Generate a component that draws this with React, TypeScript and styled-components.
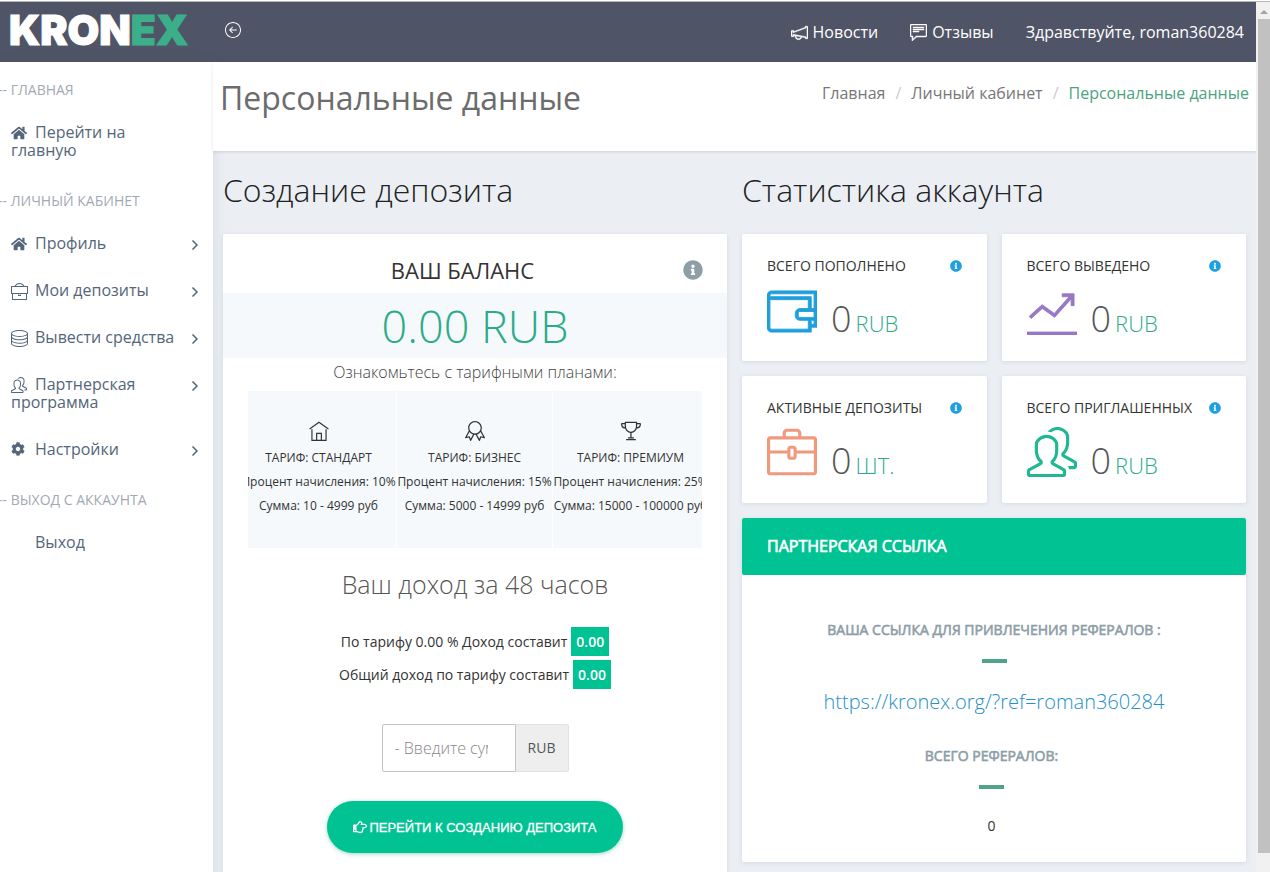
import React from 'react';
import styled, { createGlobalStyle } from 'styled-components';
import { TfiAnnouncement, TfiBriefcase, TfiCommentAlt, TfiHome, TfiServer, TfiStatsUp, TfiWallet } from 'react-icons/tfi';
import { SlArrowLeftCircle, SlBadge, SlBriefcase, SlPeople, SlTrophy } from 'react-icons/sl';
import { FaCog, FaHome, FaInfoCircle, FaRegHandPointRight } from 'react-icons/fa';
import type { IconType } from 'react-icons';

const GlobalStyle = createGlobalStyle`
  * { box-sizing: border-box; }
  body {
    margin: 0;
    background: #ebeff4;
    color: #333;
    font: 400 14px/24px "Open Sans", "Noto Sans", sans-serif;
  }
  a { color: inherit; text-decoration: none; }
  h1, h2, h3, h4, p, ul, ol, dl, dd { margin: 0; padding: 0; font-weight: 400; }
  ul, ol { list-style: none; }
  svg { flex: none; }
`;

const Window = styled.div`
  display: flex;
  height: 100vh;
  overflow: hidden;
  border-top: 1px solid #fff;
`;

const Page = styled.div`
  flex: 1;
  min-width: 0;
  border-top: 1px solid #b4b5b8;
`;

const Header = styled.header`
  display: flex;
  align-items: center;
  height: 60px;
  padding: 0 12px 0 9px;
  background: #505467;
  color: #fff;
  svg { stroke: currentColor; stroke-width: 0.5px; }
`;

const Logo = styled.a`
  flex: none;
  width: 216px;
  padding-bottom: 4px;
  font: 900 41px/56px Inter, sans-serif;
  -webkit-text-stroke: 1px currentColor;
  color: #fff;
  span { color: #3aaf8a; }
`;

const CollapseButton = styled.button`
  display: flex;
  padding: 0;
  margin-bottom: 4px;
  border: 0;
  background: none;
  color: #fff;
`;

const TopNav = styled.nav`
  display: flex;
  gap: 32px;
  margin-left: auto;
  font-size: 16px;
`;

const TopLink = styled.a`
  display: flex;
  align-items: center;
  gap: 5px;
`;

const Body = styled.div`
  display: flex;
  align-items: stretch;
  min-height: calc(100vh - 62px);
`;

const Sidebar = styled.nav`
  flex: none;
  width: 213px;
  padding-top: 16px;
  background: #fff;
  box-shadow: 1px 0 12px rgba(60, 70, 100, 0.12);
`;

const NavTitle = styled.h4`
  margin-left: -2px;
  padding-bottom: 21px;
  font-size: 14px;
  line-height: 24px;
  color: #a2a9b4;
  white-space: nowrap;
`;

const NavGroup = styled.ul`
  padding-bottom: 30px;
`;

const NavItem = styled.li`
  & + & { margin-top: 29px; }
`;

const NavLink = styled.a`
  display: flex;
  align-items: flex-start;
  padding: 0 14px 0 11px;
  font-size: 16px;
  line-height: 18px;
  color: #54667a;
  svg:last-child { margin-top: 5px; }
`;

const NavText = styled.span`
  flex: 1;
  padding-right: 16px;
`;

const NavIcon = styled.span`
  display: inline-block;
  width: 24px;
  height: 17px;
  vertical-align: top;
  svg:last-child {
    margin-top: 2px;
    vertical-align: top;
  }
`;

const Main = styled.main`
  flex: 1;
  min-width: 0;
`;

const TitleBar = styled.div`
  display: flex;
  justify-content: space-between;
  padding: 19px 7px 36px;
  background: #fff;
  box-shadow: 0 1px 3px rgba(0, 0, 0, 0.12);
`;

const PageTitle = styled.h1`
  font-size: 32px;
  line-height: 34px;
  color: #6c6c6c;
`;

const Crumbs = styled.ol`
  display: flex;
  font-size: 16px;
  line-height: 24px;
  li + li::before {
    content: '/';
    padding: 0 10px;
    color: #ccc;
  }
`;

const Crumb = styled.li<{ $current?: boolean }>`
  color: ${p => (p.$current ? '#4aa37e' : '#777')};
`;

const Columns = styled.div`
  display: grid;
  grid-template-columns: minmax(0, 1fr) minmax(0, 1fr);
  align-items: start;
  gap: 15px;
  padding: 19px 10px 0;
`;

const SectionTitle = styled.h2`
  padding-bottom: 24px;
  font-size: 32px;
  font-weight: 300;
  line-height: 40px;
  color: #222;
`;

const Card = styled.section`
  border-radius: 2px;
  background: #fff;
  box-shadow: 0 1px 4px rgba(50, 60, 90, 0.12);
`;

const DepositCard = styled(Card)`
  min-height: 700px;
  text-align: center;
`;

const BalanceHead = styled.div`
  display: flex;
  align-items: center;
  height: 59px;
  padding: 13px 24px 0 0;
  color: #8d9ea7;
`;

const BalanceTitle = styled.h3`
  flex: 1;
  padding-left: 19px;
  font-size: 22px;
  line-height: 32px;
  color: #333;
`;

const Balance = styled.p`
  background: #f5f9fc;
  font-size: 45px;
  font-weight: 300;
  line-height: 65px;
  color: #2bab89;
`;

const Hint = styled.p`
  padding: 2px 0 7px;
  font-size: 16px;
  font-weight: 300;
  line-height: 24px;
  color: #444;
`;

const Plans = styled.ul`
  display: flex;
  justify-content: center;
  margin: 0 25px;
  overflow: hidden;
  background: #f5f9fc;
`;

const Plan = styled.li`
  display: flex;
  flex: none;
  flex-direction: column;
  align-items: center;
  width: 156px;
  height: 157px;
  padding-top: 30px;
  border-right: 1px solid #fff;
  font-size: 12px;
  line-height: 24px;
  white-space: nowrap;
`;

const PlanName = styled.h4`
  padding-top: 5px;
`;

const IncomeTitle = styled.h3`
  padding: 18px 0 25px;
  font-size: 25px;
  font-weight: 300;
  line-height: 36px;
  color: #555;
`;

const IncomeRow = styled.p`
  display: flex;
  justify-content: center;
  gap: 4px;
  padding-bottom: 4px;
  line-height: 29px;
`;

const Amount = styled.strong`
  padding: 0 5px;
  background: #00c292;
  font-weight: 600;
  color: #fff;
`;

const AmountField = styled.div`
  display: flex;
  justify-content: center;
  height: 48px;
  margin: 31px 0 29px;
`;

const AmountInput = styled.input`
  width: 134px;
  padding: 0 27px 0 12px;
  border: 1px solid #c4c4c4;
  border-radius: 2px 0 0 2px;
  font: 300 16px "Open Sans", sans-serif;
  &::placeholder { color: #888; opacity: 1; }
`;

const Currency = styled.label`
  width: 53px;
  border: 1px solid #e2e2e2;
  border-left: 0;
  border-radius: 0 2px 2px 0;
  background: #eee;
  line-height: 46px;
  color: #555;
`;

const SubmitButton = styled.button`
  display: inline-flex;
  align-items: center;
  gap: 2px;
  height: 52px;
  padding: 0 26px;
  border: 0;
  border-radius: 26px;
  background: #00c292;
  box-shadow: 0 1px 4px rgba(0, 150, 110, 0.4);
  font: 400 13px "Liberation Sans", sans-serif;
  -webkit-text-stroke: 0.3px #fff;
  color: #fff;
`;

const Stats = styled.div`
  display: grid;
  grid-template-columns: 1fr 1fr;
  gap: 15px;
  padding-bottom: 15px;
`;

const StatCard = styled(Card)`
  height: 127px;
  padding: 20px 25px 0;
`;

const StatHead = styled.div`
  display: flex;
  align-items: center;
  justify-content: space-between;
  color: #1d9fe0;
`;

const StatTitle = styled.h3`
  font-size: 14px;
  line-height: 24px;
  color: #333;
`;

const StatBody = styled.div<{ $tint: string }>`
  display: flex;
  gap: 14px;
  padding-top: 7px;
  color: ${p => p.$tint};
  svg { stroke: currentColor; stroke-width: 0.3px; }
`;

const StatValue = styled.p`
  padding-top: 9px;
  font-size: 36px;
  font-weight: 300;
  line-height: 50px;
  color: #555;
  small {
    margin-left: 4px;
    font-size: 22px;
    color: #2bab89;
  }
`;

const PartnerTitle = styled.h3`
  padding: 0 25px;
  border-radius: 2px;
  background: #00c292;
  font-size: 16px;
  line-height: 57px;
  -webkit-text-stroke: 0.7px #fff;
  color: #fff;
`;

const PartnerBody = styled.div`
  padding: 43px 25px 24px;
  text-align: center;
`;

const PartnerLabel = styled.h4`
  font-size: 14px;
  line-height: 24px;
  -webkit-text-stroke: 0.6px #8d9ea7;
  color: #8d9ea7;
  &::after {
    content: '';
    display: block;
    width: 25px;
    height: 4px;
    margin: 17px auto 0;
    background: #4fa38b;
  }
`;

const PartnerLink = styled.a`
  display: block;
  padding: 25px 0 28px;
  font-size: 20px;
  font-weight: 300;
  line-height: 28px;
  color: #2690c8;
`;

const Referrals = styled.div`
  padding-right: 5px;
`;

const ReferralCount = styled.p`
  padding-top: 25px;
`;

const Scrollbar = styled.div`
  flex: none;
  display: flex;
  flex-direction: column;
  align-items: center;
  width: 14px;
  padding: 8px 0 19px 2px;
  border-top: 1px solid #b4b5b8;
  background: #f1f1f1;
`;

const ScrollThumb = styled.div`
  flex: 1;
  align-self: stretch;
  margin-top: 5px;
  background: #c1c1c1;
`;

interface NavEntry {
  text: string;
  icon?: IconType;
  size?: number;
  arrow?: boolean;
}

const NAV: { title: string; items: NavEntry[] }[] = [
  { title: 'ГЛАВНАЯ', items: [{ text: 'Перейти на главную', icon: FaHome, size: 16 }] },
  {
    title: 'ЛИЧНЫЙ КАБИНЕТ',
    items: [
      { text: 'Профиль', icon: FaHome, size: 16, arrow: true },
      { text: 'Мои депозиты', icon: TfiBriefcase, size: 17, arrow: true },
      { text: 'Вывести средства', icon: TfiServer, size: 17, arrow: true },
      { text: 'Партнерская программа', icon: SlPeople, size: 16, arrow: true },
      { text: 'Настройки', icon: FaCog, size: 14, arrow: true },
    ],
  },
  { title: 'ВЫХОД С АККАУНТА', items: [{ text: 'Выход' }] },
];

const PLANS = [
  { name: 'СТАНДАРТ', icon: TfiHome, percent: '10%', sum: '10 - 4999' },
  { name: 'БИЗНЕС', icon: SlBadge, percent: '15%', sum: '5000 - 14999' },
  { name: 'ПРЕМИУМ', icon: SlTrophy, percent: '25%', sum: '15000 - 100000' },
];

const STATS = [
  { title: 'ВСЕГО ПОПОЛНЕНО', icon: TfiWallet, tint: '#1f9fdc', unit: 'RUB' },
  { title: 'ВСЕГО ВЫВЕДЕНО', icon: TfiStatsUp, tint: '#9678c4', unit: 'RUB' },
  { title: 'АКТИВНЫЕ ДЕПОЗИТЫ', icon: SlBriefcase, tint: '#f0997c', unit: 'ШТ.' },
  { title: 'ВСЕГО ПРИГЛАШЕННЫХ', icon: SlPeople, tint: '#1fb892', unit: 'RUB' },
];

const Chevron = () => (
  <svg width="8" height="12" viewBox="0 0 8 12" fill="none" stroke="#54667a" strokeWidth="1.5">
    <path d="M1.5 1.5 6 6 1.5 10.5" />
  </svg>
);

export default function App() {
  return (
    <>
      <GlobalStyle />
      <Window>
        <Page>
          <Header>
            <Logo href="#">KRON<span>EX</span></Logo>
            <CollapseButton type="button" aria-label="Свернуть меню"><SlArrowLeftCircle size={16} /></CollapseButton>
            <TopNav>
              <TopLink href="#"><TfiAnnouncement size={17} />Новости</TopLink>
              <TopLink href="#"><TfiCommentAlt size={17} />Отзывы</TopLink>
              <TopLink href="#">Здравствуйте, roman360284</TopLink>
            </TopNav>
          </Header>
          <Body>
            <Sidebar>
              {NAV.map(group => (
                <React.Fragment key={group.title}>
                  <NavTitle>-- {group.title}</NavTitle>
                  <NavGroup>
                    {group.items.map(({ text, icon: Icon, size, arrow }) => (
                      <NavItem key={text}>
                        <NavLink href="#">
                          <NavText><NavIcon>{Icon && <Icon size={size} />}</NavIcon>{text}</NavText>
                          {arrow && <Chevron />}
                        </NavLink>
                      </NavItem>
                    ))}
                  </NavGroup>
                </React.Fragment>
              ))}
            </Sidebar>
            <Main>
              <TitleBar>
                <PageTitle>Персональные данные</PageTitle>
                <Crumbs>
                  <Crumb><a href="#">Главная</a></Crumb>
                  <Crumb><a href="#">Личный кабинет</a></Crumb>
                  <Crumb $current>Персональные данные</Crumb>
                </Crumbs>
              </TitleBar>
              <Columns>
                <div>
                  <SectionTitle>Создание депозита</SectionTitle>
                  <DepositCard>
                    <BalanceHead>
                      <BalanceTitle>ВАШ БАЛАНС</BalanceTitle>
                      <FaInfoCircle size={20} />
                    </BalanceHead>
                    <Balance>0.00 RUB</Balance>
                    <Hint>Ознакомьтесь с тарифными планами:</Hint>
                    <Plans>
                      {PLANS.map(({ name, icon: Icon, percent, sum }) => (
                        <Plan key={name}>
                          <Icon size={20} />
                          <PlanName>ТАРИФ: {name}</PlanName>
                          <p>Процент начисления: {percent}</p>
                          <p>Сумма: {sum} руб</p>
                        </Plan>
                      ))}
                    </Plans>
                    <IncomeTitle>Ваш доход за 48 часов</IncomeTitle>
                    <IncomeRow>По тарифу 0.00 % Доход составит <Amount>0.00</Amount></IncomeRow>
                    <IncomeRow>Общий доход по тарифу составит <Amount>0.00</Amount></IncomeRow>
                    <AmountField>
                      <AmountInput id="amount" type="text" placeholder="- Введите сумму -" />
                      <Currency htmlFor="amount">RUB</Currency>
                    </AmountField>
                    <SubmitButton type="button"><FaRegHandPointRight size={14} />ПЕРЕЙТИ К СОЗДАНИЮ ДЕПОЗИТА</SubmitButton>
                  </DepositCard>
                </div>
                <div>
                  <SectionTitle>Статистика аккаунта</SectionTitle>
                  <Stats>
                    {STATS.map(({ title, icon: Icon, tint, unit }) => (
                      <StatCard key={title}>
                        <StatHead>
                          <StatTitle>{title}</StatTitle>
                          <FaInfoCircle size={12} />
                        </StatHead>
                        <StatBody $tint={tint}>
                          <Icon size={50} />
                          <StatValue>0<small>{unit}</small></StatValue>
                        </StatBody>
                      </StatCard>
                    ))}
                  </Stats>
                  <Card>
                    <PartnerTitle>ПАРТНЕРСКАЯ ССЫЛКА</PartnerTitle>
                    <PartnerBody>
                      <PartnerLabel>ВАША ССЫЛКА ДЛЯ ПРИВЛЕЧЕНИЯ РЕФЕРАЛОВ :</PartnerLabel>
                      <PartnerLink href="#">https://kronex.org/?ref=roman360284</PartnerLink>
                      <Referrals>
                        <PartnerLabel>ВСЕГО РЕФЕРАЛОВ:</PartnerLabel>
                        <ReferralCount>0</ReferralCount>
                      </Referrals>
                    </PartnerBody>
                  </Card>
                </div>
              </Columns>
            </Main>
          </Body>
        </Page>
        <Scrollbar aria-hidden="true">
          <svg width="8" height="4" viewBox="0 0 8 4"><path d="M0 4 4 0l4 4z" fill="#a3a3a3" /></svg>
          <ScrollThumb />
        </Scrollbar>
      </Window>
    </>
  );
}
